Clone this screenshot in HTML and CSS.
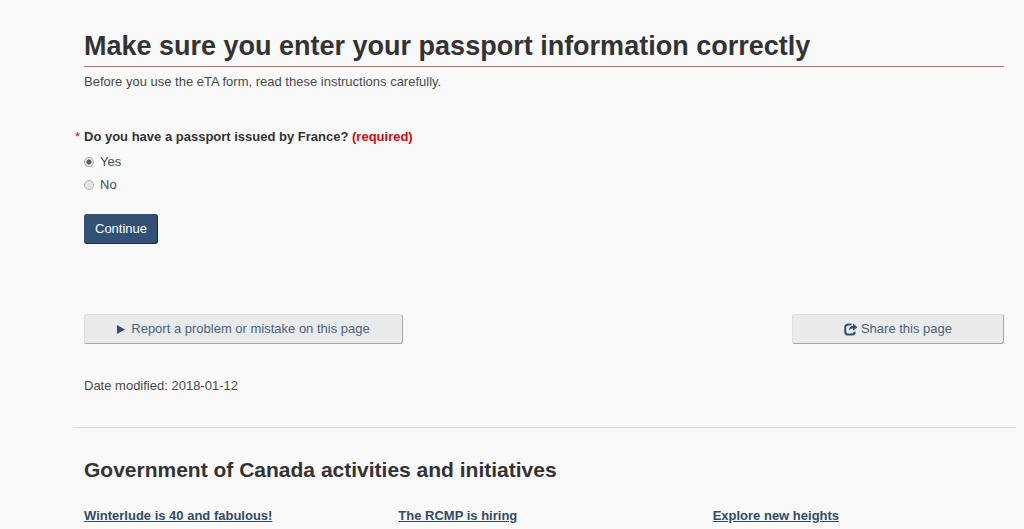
FILE: index.html
```html
<!DOCTYPE html>
<html lang="en">
<head>
  <meta charset="UTF-8">
  <meta name="viewport" content="width=device-width, initial-scale=1.0">
  <title>Make sure you enter your passport information correctly</title>
  <link rel="stylesheet" href="styles.css">
</head>
<body>
  <div class="container">
    <main class="content">
      <h1>Make sure you enter your passport information correctly</h1>
      <p class="intro">Before you use the eTA form, read these instructions carefully.</p>

      <form class="question">
        <fieldset>
          <legend><span class="star">*</span>Do you have a passport issued by France? <strong class="required">(required)</strong></legend>
          <label class="choice" for="france-yes">
            <input type="radio" id="france-yes" name="france" value="yes" checked>
            Yes
          </label>
          <label class="choice" for="france-no">
            <input type="radio" id="france-no" name="france" value="no">
            No
          </label>
        </fieldset>
        <button type="submit" class="btn btn-primary">Continue</button>
      </form>

      <div class="page-tools">
        <button type="button" class="btn btn-default btn-report">
          <svg class="icon-arrow" viewBox="0 0 8 9" aria-hidden="true"><path d="M0 0L8 4.5L0 9Z"/></svg>
          Report a problem or mistake on this page
        </button>
        <button type="button" class="btn btn-default btn-share">
          <svg class="icon-share" viewBox="0 0 14 13" aria-hidden="true">
            <path d="M7.5 1.4H4.5Q1.2 1.4 1.2 4.6V8.4Q1.2 11.6 4.5 11.6H7.5Q10.6 11.6 10.8 8.6" fill="none" stroke="currentColor" stroke-width="2"/>
            <path d="M9 0.6L13.4 4.2L9 7.8V5.6Q6.6 5.4 4.8 7.4Q5.2 3.2 9 2.8Z"/>
          </svg>
          Share this page
        </button>
      </div>

      <p class="modified">Date modified: <time datetime="2018-01-12">2018-01-12</time></p>
    </main>

    <aside class="activities">
      <h2>Government of Canada activities and initiatives</h2>
      <div class="features">
        <a href="#">Winterlude is 40 and fabulous!</a>
        <a href="#">The RCMP is hiring</a>
        <a href="#">Explore new heights</a>
      </div>
    </aside>
  </div>
</body>
</html>
```
FILE: styles.css
```css
* {
  box-sizing: border-box;
}

body {
  margin: 0;
  background: #f9f9f9;
  color: #4a4a4a;
  font-family: "Liberation Sans", Arial, sans-serif;
  font-size: 13px;
  line-height: 18px;
}

.container {
  margin: 0 8px 0 73px;
}

.content {
  padding: 28px 12px 32px 11px;
}

h1 {
  margin: 0;
  padding-bottom: 2px;
  border-bottom: 1px solid #c7686c;
  color: #333;
  font-size: 27px;
  line-height: 36px;
}

.intro {
  margin: 6px 0 37px;
}

fieldset {
  margin: 0;
  padding: 0;
  border: 0;
}

legend {
  margin: 0 0 7px -9px;
  padding: 0;
  color: #333;
  font-weight: bold;
}

.star {
  display: inline-block;
  width: 9px;
  color: #d3080c;
  font-weight: normal;
}

.required {
  color: #d3080c;
}

.choice {
  display: flex;
  align-items: center;
  gap: 6px;
  margin-bottom: 5px;
}

.choice input {
  appearance: none;
  width: 10px;
  height: 10px;
  margin: 0;
  border: 1px solid #b4b4b4;
  border-radius: 50%;
  background: #e4e4e4;
}

.choice input:checked {
  background: radial-gradient(circle, #5a5a5a 0, #5a5a5a 2px, #e4e4e4 3px);
}

.btn {
  padding: 5px 10px;
  border: 1px solid;
  border-radius: 3px;
  font: inherit;
  line-height: 18px;
  cursor: pointer;
}

.btn-primary {
  margin-top: 15px;
  border-color: #335075 #1c2c40 #1c2c40 #335075;
  background: #335075;
  color: #fff;
}

.btn-default {
  display: flex;
  align-items: center;
  justify-content: center;
  border-color: #dcdee1 #a5a7a9 #a5a7a9 #dcdee1;
  background: #e9eaeb;
  color: #4b6483;
}

.page-tools {
  display: flex;
  justify-content: space-between;
  margin: 70px 0 33px;
}

.btn-report {
  flex: 0 1 319px;
  gap: 6px;
}

.btn-share {
  flex: 0 1 212px;
  gap: 3px;
}

.icon-arrow {
  width: 8px;
  height: 9px;
  fill: #335075;
}

.icon-share {
  width: 14px;
  height: 13px;
  color: #335075;
  fill: #335075;
}

.modified {
  margin: 0;
}

.activities {
  padding: 28px 0 4px;
  border-top: 1px solid #d9d9d9;
}

h2 {
  margin: 0 11px 23px;
  color: #333;
  font-size: 21px;
  line-height: 28px;
}

.features {
  display: grid;
  grid-template-columns: repeat(3, 1fr);
}

.features a {
  justify-self: start;
  margin: 0 11px;
  color: #334a68;
  font-weight: bold;
}
```
